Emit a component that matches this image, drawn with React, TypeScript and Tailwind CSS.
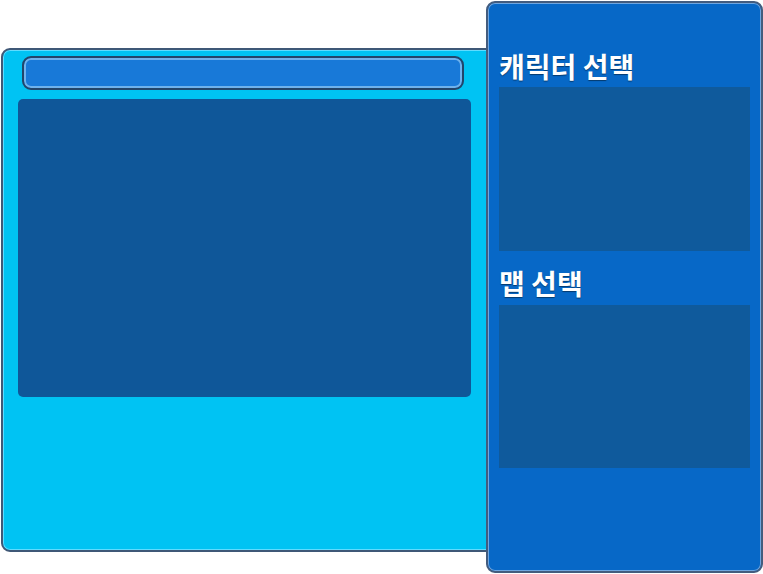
export default function App() {
  return (
    <div className="flex h-[574px] w-[763px] items-start bg-white font-['Noto_Sans_CJK_KR','Noto_Sans',sans-serif]">
      {/* left: room / chat area */}
      <div className="ml-[1px] mt-[48px] h-[504px] w-[500px] shrink-0 rounded-[9px] border-2 border-[#3f5877] bg-[#00c3f3] pt-[6px] shadow-[inset_0_0_0_1px_#5fdcff]">
        <div className="ml-[19px] h-[34px] w-[442px] rounded-[9px] border-2 border-[#22456a] bg-[#1879d8] shadow-[inset_0_0_0_2px_#6fb2ec]" />
        <div className="ml-[15px] mt-[9px] h-[298px] w-[453px] rounded-[5px] bg-[#0f5799]" />
      </div>

      {/* right: selection panel */}
      <div className="relative z-10 ml-[-15px] mt-[1px] h-[572px] w-[277px] shrink-0 rounded-[9px] border-2 border-[#435c7e] bg-[#0768c7] pl-[11px] shadow-[inset_0_0_0_1px_#6fa6e0]">
        <h2 className="mt-[47px] text-[28px] font-bold leading-[32px] text-white [text-shadow:0_1px_1px_rgba(0,0,0,0.45)]">
          캐릭터 선택
        </h2>
        <div className="mt-[5px] h-[164px] w-[251px] bg-[#0f5a9c]" />
        <h2 className="mt-[16px] text-[28px] font-bold leading-[32px] text-white [text-shadow:0_1px_1px_rgba(0,0,0,0.45)]">
          맵 선택
        </h2>
        <div className="mt-[6px] h-[163px] w-[251px] bg-[#0f5a9c]" />
      </div>
    </div>
  );
}
